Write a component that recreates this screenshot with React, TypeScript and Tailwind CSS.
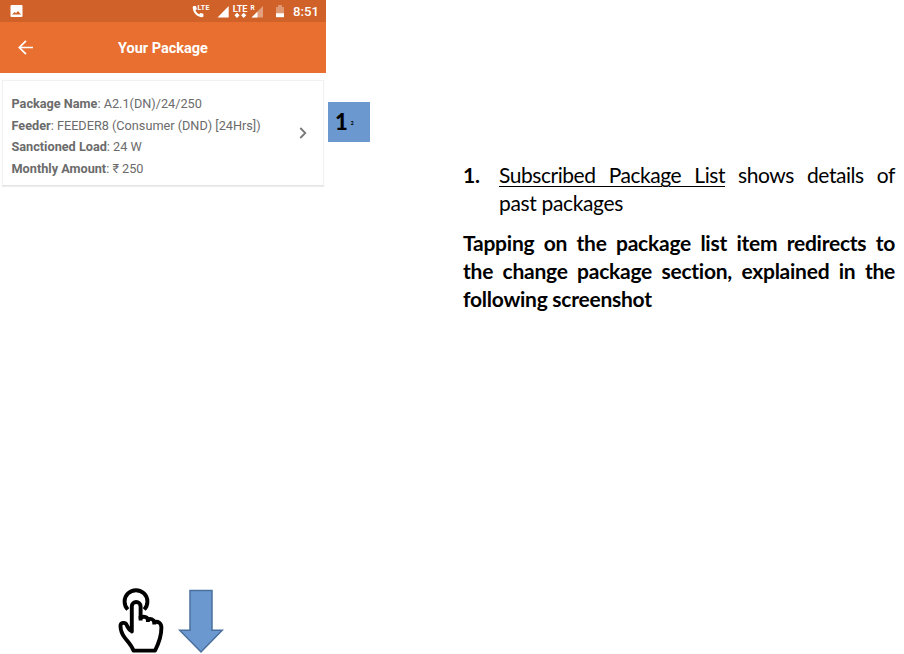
const lato = "font-['Lato','Noto_Sans',sans-serif]";

function StatusBar() {
  return (
    <div className="flex h-[22px] items-center bg-[#d06128] text-white">
      <svg className="ml-[10px] h-3 w-[13px]" viewBox="0 0 13 12">
        <path fill="white" fillRule="evenodd" d="M1.5 0h10a1 1 0 0 1 1 1v10a1 1 0 0 1-1 1h-10a1 1 0 0 1-1-1V1a1 1 0 0 1 1-1ZM2 9.5h9L8 6 6 8.3 4.7 7Z" />
      </svg>
      <svg className="ml-[167px] h-[22px] w-[97px]" viewBox="190 0 97 22" fill="white">
        <path d="M194 6h2l.9 3-1.4 1.4c.8 1.8 2 2.9 3.6 3.8l1.5-1.3 2.8.9v2.3c0 .8-.5 1.2-1.2 1.2-5.3-.3-9.1-4.2-9.5-9.7 0-.9.4-1.6 1.3-1.6Z" />
        <text x="197.6" y="10" fontFamily="Roboto, sans-serif" fontSize="7" fontWeight="700" textLength="11.8">LTE</text>
        <path d="M217.5 17.5h11.2V6Z" />
        <text x="232.7" y="11.6" fontFamily="Roboto, sans-serif" fontSize="9" fontWeight="700" textLength="14.8" lengthAdjust="spacingAndGlyphs">LTE</text>
        <path d="m237 12.7 2.6 2.6-2.6 2.6-2.6-2.6ZM243.7 12.7l2.6 2.6-2.6 2.6-2.6-2.6Z" />
        <text x="250.5" y="10.4" fontFamily="Roboto, sans-serif" fontSize="6.5" fontWeight="700">R</text>
        <path d="M251.5 17.5H263V6Z" fillOpacity=".4" />
        <path d="M251.5 17.5h6v-5.8Z" />
        <path d="M276 7h2V5h4v2h2v6.2h-8Z" fillOpacity=".35" />
        <path d="M276 13.2h8v4h-8Z" />
      </svg>
      <span className="ml-[6px] mt-px text-[13.2px] font-medium leading-none">8:51</span>
    </div>
  );
}

function Detail({ label, value }: { label: string; value: string }) {
  return (
    <div className="h-[21.8px] whitespace-nowrap leading-[22px]">
      <span className="font-bold">{label}</span>: {value}
    </div>
  );
}

export default function App() {
  return (
    <main className="flex h-[654px] w-[904px] overflow-hidden bg-white">
      <section className="flex w-[326px] shrink-0 flex-col font-[Roboto,'Noto_Sans',sans-serif]">
        <StatusBar />
        <header className="relative flex h-[51px] items-center justify-center bg-[#e86f30] text-white">
          <svg className="absolute left-[18px] top-[18px] h-4 w-4" viewBox="0 0 16 16" fill="none" stroke="white" strokeWidth="1.7">
            <path d="M15 7.5H2M8 .8 1.3 7.5 8 14.2" />
          </svg>
          <h1 className="mt-[3px] text-[14.5px] font-bold leading-none">Your Package</h1>
        </header>
        <article className="ml-[2px] mt-[7px] flex h-[106px] w-[322px] items-center border border-[#f1f1f1] border-b-[#e3e3e3] pl-[8.5px] text-[12.7px] text-[#6b6b6b] shadow-[0_1px_1px_#eeeeee]">
          <div className="w-[285.5px] pt-[6.6px]">
            <Detail label="Package Name" value="A2.1(DN)/24/250" />
            <Detail label="Feeder" value="FEEDER8 (Consumer (DND) [24Hrs])" />
            <Detail label="Sanctioned Load" value="24 W" />
            <Detail label="Monthly Amount" value="₹ 250" />
          </div>
          <svg className="ml-[2px] h-3 w-2" viewBox="0 0 8 12" fill="none" stroke="#777" strokeWidth="1.8">
            <path d="m1.3 1 5 5-5 5" />
          </svg>
        </article>
        <div className="mt-auto flex h-[67px] pl-[117px]">
          <svg className="mt-px h-[66px] w-[48px]" viewBox="117 587 48 66" fill="none" stroke="black" strokeWidth="3.9" strokeLinejoin="round">
            <path d="M127.8 608.5A11.4 11.4 0 1 1 144.2 608.5" />
            <path d="M131.8 630.5V605.5c0-5.9 8.8-5.9 8.8 0V617c2-2 6.5-1.6 7.3 1.5 2.4-1.4 5.9-.2 6.4 2.5 4-.8 7.1 1 7.1 5.8 0 8.2-2.2 14.7-6.4 22.8h-21.5c-1.8-5.4-5.3-8.6-8.8-13-2.5-3.2-4.2-7-4.2-11.8 0-3.4 4.8-4 6.2-.8 1.2 2.8 2 4.8 5.1 6Z" />
            <path d="M140.6 615v4.5M147.9 617.5v3.5M154.3 620v3.5" />
          </svg>
          <svg className="ml-[12px] h-[67px] w-[48px]" viewBox="177 587 48 67">
            <path d="M190 590.5h22v39.7h10.2L201 652l-21.3-21.8H190Z" fill="#6a98cf" stroke="#49709f" strokeWidth="1.5" />
          </svg>
        </div>
      </section>
      <aside className={`ml-[2px] mt-[102px] flex h-10 w-[42px] shrink-0 items-center bg-[#6a98cf] pl-[7px] ${lato}`}>
        <span className="-mt-px text-[22px] font-black leading-none">1</span>
        <span className="ml-[3px] mt-[2px] text-[5px] font-black leading-none">2</span>
      </aside>
      <section className={`ml-[93px] mt-[161px] w-[432px] text-[21px] leading-[28px] text-black ${lato}`}>
        <div className="flex">
          <span className="w-9 shrink-0 font-bold tracking-[-0.3px]">1.</span>
          <div className="w-[396px]">
            <p className="whitespace-nowrap text-justify tracking-[-0.45px] [text-align-last:justify]">
              <span className="underline decoration-1 underline-offset-[3px]">Subscribed Package List</span> shows details of
            </p>
            <p className="tracking-[-0.35px]"><span>past packages</span></p>
          </div>
        </div>
        <div className="mt-[12px] font-bold tracking-[-0.25px]">
          <p className="whitespace-nowrap [text-align-last:justify]">Tapping on the package list item redirects to</p>
          <p className="whitespace-nowrap [text-align-last:justify]">the change package section, explained in the</p>
          <p><span>following screenshot</span></p>
        </div>
      </section>
    </main>
  );
}
